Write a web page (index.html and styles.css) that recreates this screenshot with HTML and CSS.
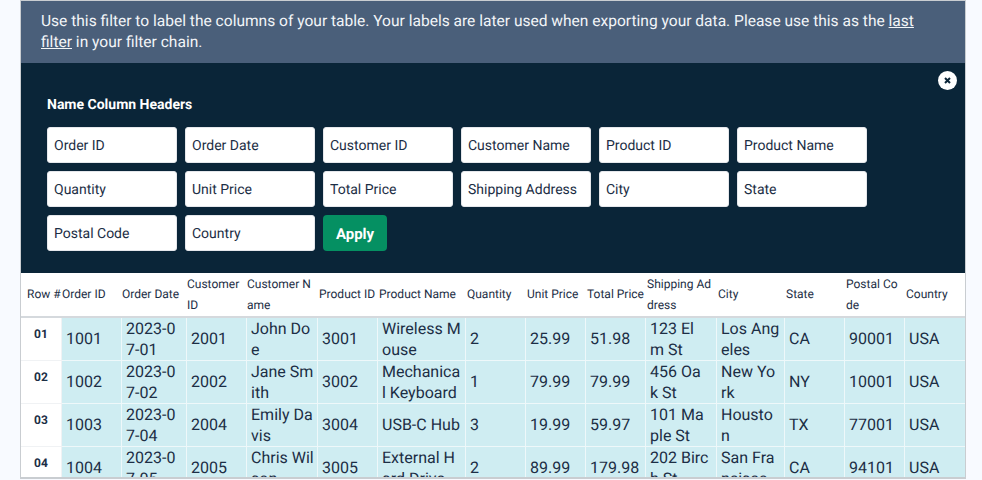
FILE: index.html
```html
<!DOCTYPE html>
<html lang="en">
<head>
  <meta charset="UTF-8" />
  <title>Name Column Headers</title>
  <link rel="stylesheet" href="styles.css">
</head>
<body>
  <div class="container">
    <div class="banner">
      Use this filter to label the columns of your table. Your labels are later used when exporting your data. Please use this as the <u>last filter</u> in your filter chain.
    </div>

    <div class="panel">
      <button class="close" aria-label="Close">
        <svg width="9" height="9" viewBox="0 0 9 9"><path d="M2 2l5 5M7 2l-5 5" /></svg>
      </button>
      <h3>Name Column Headers</h3>
      <div class="fields">
        <input type="text" value="Order ID" />
        <input type="text" value="Order Date" />
        <input type="text" value="Customer ID" />
        <input type="text" value="Customer Name" />
        <input type="text" value="Product ID" />
        <input type="text" value="Product Name" />
        <input type="text" value="Quantity" />
        <input type="text" value="Unit Price" />
        <input type="text" value="Total Price" />
        <input type="text" value="Shipping Address" />
        <input type="text" value="City" />
        <input type="text" value="State" />
        <input type="text" value="Postal Code" />
        <input type="text" value="Country" />
        <button class="apply">Apply</button>
      </div>
    </div>

    <table>
      <colgroup>
        <col class="w-row" />
        <col class="w-60" />
        <col class="w-65" />
        <col class="w-60" />
        <col class="w-71" />
        <col class="w-60" />
        <col class="w-88" />
        <col class="w-60" />
        <col class="w-60" />
        <col class="w-60" />
        <col class="w-71" />
        <col class="w-68" />
        <col class="w-60" />
        <col class="w-60" />
        <col class="w-61" />
      </colgroup>
      <thead>
        <tr>
          <th>Row #</th>
          <th>Order ID</th>
          <th>Order Date</th>
          <th>Customer ID</th>
          <th>Customer Name</th>
          <th>Product ID</th>
          <th>Product Name</th>
          <th>Quantity</th>
          <th>Unit Price</th>
          <th>Total Price</th>
          <th>Shipping Address</th>
          <th>City</th>
          <th>State</th>
          <th>Postal Code</th>
          <th>Country</th>
        </tr>
      </thead>
      <tbody>
        <tr>
          <td class="num">01</td>
          <td>1001</td>
          <td class="wrap">2023-07-01</td>
          <td>2001</td>
          <td class="wrap name">John Doe</td>
          <td>3001</td>
          <td class="wrap">Wireless Mouse</td>
          <td>2</td>
          <td>25.99</td>
          <td>51.98</td>
          <td class="wrap addr">123 El<br>m St</td>
          <td class="wrap">Los Angeles</td>
          <td>CA</td>
          <td>90001</td>
          <td>USA</td>
        </tr>
        <tr>
          <td class="num">02</td>
          <td>1002</td>
          <td class="wrap">2023-07-02</td>
          <td>2002</td>
          <td class="wrap name">Jane Smith</td>
          <td>3002</td>
          <td class="wrap">Mechanical Keyboard</td>
          <td>1</td>
          <td>79.99</td>
          <td>79.99</td>
          <td class="wrap addr">456 Oak St</td>
          <td class="wrap">New York</td>
          <td>NY</td>
          <td>10001</td>
          <td>USA</td>
        </tr>
        <tr>
          <td class="num">03</td>
          <td>1003</td>
          <td class="wrap">2023-07-04</td>
          <td>2004</td>
          <td class="wrap name">Emily Davis</td>
          <td>3004</td>
          <td>USB-C Hub</td>
          <td>3</td>
          <td>19.99</td>
          <td>59.97</td>
          <td class="wrap addr">101 Maple St</td>
          <td class="wrap">Houston</td>
          <td>TX</td>
          <td>77001</td>
          <td>USA</td>
        </tr>
        <tr>
          <td class="num">04</td>
          <td>1004</td>
          <td class="wrap">2023-07-05</td>
          <td>2005</td>
          <td class="wrap name">Chris Wilson</td>
          <td>3005</td>
          <td class="wrap">External Hard Drive</td>
          <td>2</td>
          <td>89.99</td>
          <td>179.98</td>
          <td class="wrap addr">202 Birch St</td>
          <td class="wrap">San Francisco</td>
          <td>CA</td>
          <td>94101</td>
          <td>USA</td>
        </tr>
      </tbody>
    </table>
  </div>
</body>
</html>
```

FILE: styles.css
```css
:root {
  --navy: #0a2538;
  --slate: #4a5f7a;
  --ink: #1c2e45;
  --cell: #cfedf2;
  --line: #c9cdd1;
  --green: #059062;
}

html, body {
  height: 100%;
}

body {
  margin: 0;
  background: #f8faff;
  font-family: Roboto, sans-serif;
  color: var(--ink);
  overflow: hidden;
  text-rendering: geometricPrecision;
}

.container {
  box-sizing: border-box;
  width: 946px;
  height: 479px;
  margin-left: 20px;
  background: #fff;
  border: 1px solid var(--line);
  border-bottom-width: 2px;
  overflow: hidden;
}

.banner {
  box-sizing: border-box;
  height: 62px;
  padding: 10px 20px;
  background: var(--slate);
  color: #f2f5f8;
  font-size: 15.55px;
  line-height: 21px;
}

.panel {
  position: relative;
  box-sizing: border-box;
  height: 210px;
  padding: 33px 26px 0;
  background: var(--navy);
}

.panel h3 {
  margin: 0 0 13px;
  color: #fff;
  font-size: 14px;
  font-weight: 700;
  line-height: 18px;
}

.close {
  position: absolute;
  top: 8px;
  right: 8px;
  display: flex;
  align-items: center;
  justify-content: center;
  width: 19px;
  height: 19px;
  padding: 0;
  border: none;
  border-radius: 50%;
  background: #fff;
}

.close path {
  fill: none;
  stroke: var(--navy);
  stroke-width: 2;
}

.fields {
  display: flex;
  flex-wrap: wrap;
  gap: 8px;
  width: 820px;
}

.fields input {
  box-sizing: border-box;
  width: 130px;
  height: 36px;
  padding: 1px 6px 0;
  border: 1px solid #e5e7eb;
  border-radius: 3px;
  background: #fff;
  color: var(--ink);
  font-family: inherit;
  font-size: 14px;
  text-rendering: geometricPrecision;
}

.apply {
  width: 64px;
  height: 36px;
  padding: 1px 0 0;
  border: none;
  border-radius: 4px;
  background: var(--green);
  color: #fff;
  font-family: inherit;
  font-size: 15px;
  font-weight: 700;
  text-rendering: geometricPrecision;
}

table {
  width: 944px;
  table-layout: fixed;
  border-collapse: separate;
  border-spacing: 0;
}

.w-row { width: 41px; }
.w-60 { width: 60px; }
.w-61 { width: 61px; }
.w-65 { width: 65px; }
.w-68 { width: 68px; }
.w-71 { width: 71px; }
.w-88 { width: 88px; }

th {
  height: 43px;
  padding: 0 3px 0 0;
  border-bottom: 2px solid #d5d9dd;
  font-size: 12px;
  font-weight: 400;
  line-height: 21px;
  text-align: left;
  word-break: break-all;
}

th:first-child {
  padding-left: 6px;
  white-space: nowrap;
}

th:nth-child(n+6) {
  padding: 0 2px 0 1px;
}

td {
  height: 42px;
  padding: 0 4px;
  border-right: 1px solid #eef8fa;
  border-bottom: 1px solid #eef8fa;
  background: var(--cell);
  font-size: 16px;
  line-height: 20.8px;
  word-break: break-all;
}

td.wrap {
  line-height: 21px;
}

td.name {
  padding-right: 2px;
}

td.addr {
  padding-right: 7.3px;
}

td.num {
  height: 33px;
  padding: 0 0 9px;
  background: #fff;
  border-color: #f0f2f4;
  font-size: 12px;
  font-weight: 700;
  text-align: center;
}
```
